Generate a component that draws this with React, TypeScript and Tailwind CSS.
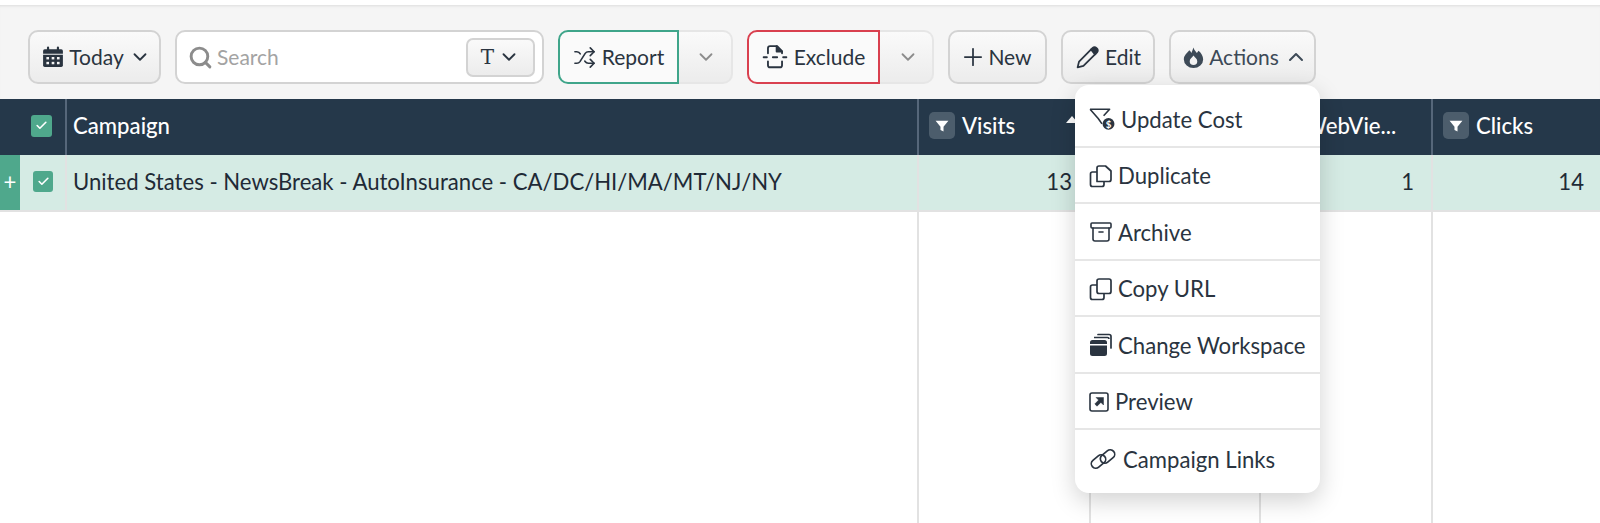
import { Archive, Check, ChevronDown, ChevronUp, Plus, Search, Shuffle } from "lucide-react";

function CalendarIcon() {
  return (
    <svg viewBox="0 0 20 20" className="h-[22px] w-[22px] shrink-0" fill="#2a3440">
      <rect x="4.5" y="0.5" width="2" height="4" rx="1" />
      <rect x="13.5" y="0.5" width="2" height="4" rx="1" />
      <path d="M1 4.5a1.5 1.5 0 0 1 1.5-1.5h15A1.5 1.5 0 0 1 19 4.5V7H1z" />
      <path d="M1 8h18v9.5a1.5 1.5 0 0 1-1.5 1.5h-15A1.5 1.5 0 0 1 1 17.5z" />
      <g fill="#f5f5f5">
        <rect x="4" y="10" width="2.4" height="2.2" />
        <rect x="8.8" y="10" width="2.4" height="2.2" />
        <rect x="13.6" y="10" width="2.4" height="2.2" />
        <rect x="4" y="14.4" width="2.4" height="2.2" />
        <rect x="8.8" y="14.4" width="2.4" height="2.2" />
        <rect x="13.6" y="14.4" width="2.4" height="2.2" />
      </g>
    </svg>
  );
}

function ExcludeIcon() {
  return (
    <svg viewBox="0 0 24 24" className="h-[26px] w-[26px] shrink-0" fill="none" stroke="#2a3440" strokeWidth="1.7" strokeLinecap="round" strokeLinejoin="round">
      <path d="M5.5 8.5V4a2 2 0 0 1 2-2h6.5l4.5 4.5v2" />
      <path d="M13.5 2v5h5" fill="#2a3440" />
      <path d="M5.5 16v3.5a2 2 0 0 0 2 2h9a2 2 0 0 0 2-2V16" />
      <path d="M1.5 12.2h3M10 12.2h4M19.5 12.2h3" />
    </svg>
  );
}

function FlameIcon() {
  return (
    <svg viewBox="0 0 20 20" className="h-[21px] w-[21px] shrink-0" fill="#3d4a57" fillRule="evenodd">
      <path d="M10 0.5C10.5 3 12 4 13.2 5.6L14.8 3.6C17.4 5.6 19.2 9 19.2 11.8A9.2 8.2 0 0 1 0.8 11.8C0.8 8 4 6 6 3.2C7 4 7.6 4.8 8 5.6C8.6 4 9.5 2.2 10 0.5ZM10 8.2C8.6 10.4 6.4 11 6.4 13.6A3.6 3.6 0 0 0 13.6 13.6C13.6 11 11.4 10.4 10 8.2Z" />
    </svg>
  );
}

function PencilIcon() {
  return (
    <svg viewBox="0 0 24 24" className="h-[25px] w-[25px] shrink-0" fill="none" stroke="#2a3440" strokeWidth="1.7" strokeLinejoin="round">
      <path d="M2.5 21.5l1.4-5.6L15.5 4.3l4.2 4.2L8.1 20.1z" />
      <path d="M15.5 4.3l1.5-1.5a2.4 2.4 0 0 1 3.4 0l.8.8a2.4 2.4 0 0 1 0 3.4l-2 2z" fill="#2a3440" />
    </svg>
  );
}

function FilterIcon() {
  return (
    <span className="flex h-[27px] w-[26px] shrink-0 items-center justify-center rounded-[5px] bg-[#4c5d6c]">
      <svg viewBox="0 0 12 12" className="h-[14px] w-[14px]" fill="#fff">
        <path d="M0.5 1.5h11L7.3 6.6v4.2L4.7 9.4V6.6z" />
      </svg>
    </span>
  );
}

function CheckBox({ size }: { size: string }) {
  return (
    <span className={`flex ${size} items-center justify-center rounded-[3px] bg-[#4fa88c]`}>
      <Check size={13} color="#fff" strokeWidth={3} />
    </span>
  );
}

function FilterCostIcon() {
  return (
    <svg viewBox="0 0 24 24" className="h-[26px] w-[26px] shrink-0" fill="none" stroke="#2a3440" strokeWidth="1.5" strokeLinejoin="round">
      <path d="M1 3h18l-5.5 6" />
      <path d="M1 3l7.5 8.5 3.5 5" />
      <circle cx="18" cy="16.5" r="5.5" fill="#2a3440" stroke="none" />
      <text x="18" y="20" fontSize="9" fontWeight="700" textAnchor="middle" fill="#fff" stroke="none" fontFamily="Lato">$</text>
    </svg>
  );
}

function DuplicateIcon() {
  return (
    <svg viewBox="0 0 24 24" className="h-6 w-6 shrink-0" fill="none" stroke="#2a3440" strokeWidth="1.7" strokeLinejoin="round">
      <path d="M8 17.5V4a2 2 0 0 1 2-2h6.5L22 7v8.5a2 2 0 0 1-2 2z" />
      <path d="M8 8H3.5a2 2 0 0 0-2 2v10.5a2 2 0 0 0 2 2H13a2 2 0 0 0 2-2v-3" />
    </svg>
  );
}

function CopyIcon() {
  return (
    <svg viewBox="0 0 24 24" className="h-6 w-6 shrink-0" fill="none" stroke="#2a3440" strokeWidth="1.7" strokeLinejoin="round">
      <rect x="8" y="2" width="14" height="14.5" rx="2" />
      <path d="M8 8H3.5a2 2 0 0 0-2 2v10.5a2 2 0 0 0 2 2H13a2 2 0 0 0 2-2v-4" />
    </svg>
  );
}

function WorkspaceIcon() {
  return (
    <svg viewBox="0 0 24 24" className="h-6 w-6 shrink-0" fill="none" stroke="#2a3440" strokeWidth="1.7" strokeLinejoin="round">
      <path d="M9 1.5h11a2 2 0 0 1 2 2V15" strokeLinecap="round" />
      <path d="M5 4.5h13.5a1.5 1.5 0 0 1 1.5 1.5" />
      <path d="M1 9.5A2.5 2.5 0 0 1 3.5 7h12A2.5 2.5 0 0 1 18 9.5V11H1z" fill="#2a3440" stroke="none" />
      <path d="M1 12.5h17v8a2.5 2.5 0 0 1-2.5 2.5h-12A2.5 2.5 0 0 1 1 20.5z" fill="#2a3440" stroke="none" />
    </svg>
  );
}

function PreviewIcon() {
  return (
    <svg viewBox="0 0 20 20" className="h-5 w-5 shrink-0" fill="none" stroke="#2a3440" strokeLinejoin="round">
      <rect x="1" y="1" width="18" height="18" rx="2" strokeWidth="1.6" />
      <path d="M7 5.5h7.5V13l-2.6-2.6L8 14.2 5.8 12l3.8-3.9z" fill="#2a3440" strokeWidth="0.5" />
    </svg>
  );
}

function LinksIcon() {
  return (
    <svg viewBox="0 0 28 28" className="h-7 w-7 shrink-0" fill="none" stroke="#2a3440" strokeWidth="1.7">
      <rect x="1.5" y="12" width="16" height="9" rx="4.5" transform="rotate(-40 9.5 16.5)" />
      <rect x="10.5" y="7" width="16" height="9" rx="4.5" transform="rotate(-40 18.5 11.5)" />
    </svg>
  );
}

const menuItems = [
  { label: "Update Cost", icon: <FilterCostIcon />, gap: "gap-[6px]" },
  { label: "Duplicate", icon: <DuplicateIcon />, gap: "gap-[5px]" },
  { label: "Archive", icon: <Archive size={24} color="#2a3440" strokeWidth={1.6} />, gap: "gap-[5px]" },
  { label: "Copy URL", icon: <CopyIcon />, gap: "gap-[5px]" },
  { label: "Change Workspace", icon: <WorkspaceIcon />, gap: "gap-[5px]" },
  { label: "Preview", icon: <PreviewIcon />, gap: "gap-[6px]" },
  { label: "Campaign Links", icon: <LinksIcon />, gap: "gap-[6px]" },
];

const btn = "flex h-[54px] items-center rounded-[10px] border-2 border-[#d3d3d3] bg-gradient-to-b from-[#fafafa] to-[#ececec] text-[21px] text-[#2a3440]";
const columns = "grid grid-cols-[67px_852px_172px_170px_172px_1fr]";

export default function App() {
  return (
    <div className="relative h-[523px] w-[1600px] overflow-hidden bg-white font-['Lato',sans-serif] text-[22.15px] text-[#1f2a36]">
      {/* Toolbar */}
      <div className="h-[99px] border-t-[5px] border-white bg-[#f5f5f5] pl-[28px] pt-[25px] shadow-[inset_0_3px_3px_-2px_rgba(0,0,0,0.1)]">
        <div className="flex items-center">
          <button className={`${btn} w-[133px] justify-center gap-[5px] pl-[4px]`}>
            <CalendarIcon />
            <span>Today</span>
            <ChevronDown size={22} strokeWidth={2} />
          </button>

          <div className="ml-[14px] flex h-[54px] w-[369px] items-center rounded-[10px] border-2 border-[#d3d3d3] bg-white pl-[11px] pr-[7px] text-[21px]">
            <Search size={25} color="#8c8c8c" strokeWidth={2.8} />
            <span className="ml-[4px] flex-1 text-[#a3a3a3]">Search</span>
            <span className="flex h-[39px] w-[69px] items-center justify-center gap-[4px] rounded-[7px] border-2 border-[#d3d3d3] bg-gradient-to-b from-[#fafafa] to-[#ececec]">
              <span className="font-['DejaVu_Serif',serif] text-[20px] leading-none text-[#2a3440]">T</span>
              <ChevronDown size={22} color="#2a3440" />
            </span>
          </div>

          <div className="ml-[14px] flex h-[54px] w-[175px] text-[21px]">
            <button className="flex w-[121px] items-center justify-center gap-[6px] rounded-l-[10px] border-2 border-[#3fa58a] bg-[#fafafa] text-[#2a3440]">
              <Shuffle size={23} strokeWidth={1.7} />
              Report
            </button>
            <span className="flex flex-1 items-center justify-center rounded-r-[10px] border-2 border-l-0 border-[#e6e6e6] bg-gradient-to-b from-[#fafafa] to-[#ececec] pl-[2px]">
              <ChevronDown size={22} color="#8c8c8c" />
            </span>
          </div>

          <div className="ml-[14px] flex h-[54px] w-[187px] text-[21px]">
            <button className="flex w-[133px] items-center justify-center gap-[6px] rounded-l-[10px] border-2 border-[#d9404f] bg-[#fafafa] text-[#2a3440]">
              <ExcludeIcon />
              Exclude
            </button>
            <span className="flex flex-1 items-center justify-center rounded-r-[10px] border-2 border-l-0 border-[#e6e6e6] bg-gradient-to-b from-[#fafafa] to-[#ececec] pl-[3px]">
              <ChevronDown size={22} color="#8c8c8c" />
            </span>
          </div>

          <button className={`${btn} ml-[14px] w-[99px] justify-center gap-[1px] pr-[4px]`}>
            <Plus size={28} strokeWidth={1.5} />
            New
          </button>
          <button className={`${btn} ml-[14px] w-[94px] justify-center gap-[5px]`}>
            <PencilIcon />
            Edit
          </button>
          <button className={`${btn} ml-[14px] w-[147px] justify-center gap-[5px] to-[#dedede] pl-[6px] text-[20.5px]`}>
            <FlameIcon />
            <span className="text-[#3d4a57]">Actions</span>
            <ChevronUp size={24} color="#3d4a57" />
          </button>
        </div>
      </div>

      {/* Table header */}
      <div className={`${columns} h-[56px] bg-[#25384a] font-medium text-white`}>
        <div className="flex items-center border-r-2 border-[#56677a] pb-[3px] pl-[31px]">
          <CheckBox size="h-[22px] w-[21px]" />
        </div>
        <div className="flex items-center border-r-2 border-[#56677a] pb-[3px] pl-[6px]">Campaign</div>
        <div className="flex items-center gap-[7px] border-r-2 border-[#56677a] pb-[3px] pl-[10px]">
          <FilterIcon />
          Visits
        </div>
        <div className="border-r-2 border-[#56677a]" />
        <div className="flex items-center gap-[7px] border-r-2 border-[#56677a] pb-[3px] pl-[10px]">
          <FilterIcon />
          WebVie...
        </div>
        <div className="flex items-center gap-[7px] pb-[3px] pl-[10px]">
          <FilterIcon />
          Clicks
        </div>
      </div>

      {/* Selected row */}
      <div className={`${columns} h-[57px] border-b-2 border-[#e2e2e2] bg-[#d5ebe4]`}>
        <div className="flex items-center border-r-2 border-[#e2e2e2]">
          <span className="flex h-full w-[20px] items-center justify-center bg-[#4fa88c] pb-[2px] text-white">+</span>
          <span className="ml-[13px] pb-[2px]">
            <CheckBox size="h-[21px] w-[20px]" />
          </span>
        </div>
        <div className="flex items-center border-r-2 border-[#e2e2e2] pb-[2px] pl-[6px]">
          United States - NewsBreak - AutoInsurance - CA/DC/HI/MA/MT/NJ/NY
        </div>
        <div className="flex items-center justify-end border-r-2 border-[#e2e2e2] pb-[2px] pr-[17px]">13</div>
        <div className="border-r-2 border-[#e2e2e2]" />
        <div className="flex items-center justify-end border-r-2 border-[#e2e2e2] pb-[2px] pr-[17px]">1</div>
        <div className="flex items-center justify-end pb-[2px] pr-[16px]">14</div>
      </div>

      {/* Empty column lines */}
      <div className={`${columns} h-[320px]`}>
        <div />
        <div className="border-r-2 border-[#e2e2e2]" />
        <div className="border-r-2 border-[#e2e2e2]" />
        <div className="border-r-2 border-[#e2e2e2]" />
        <div className="border-r-2 border-[#e2e2e2]" />
        <div />
      </div>

      {/* Sort marker showing beside the open menu */}
      <span className="absolute left-[1066px] top-[116px] h-0 w-0 border-x-[6px] border-b-[7px] border-x-transparent border-b-white" />

      {/* Actions menu */}
      <div className="absolute left-[1075px] top-[85px] w-[245px] rounded-[14px] bg-white pb-[6px] pt-[6px] shadow-[0_8px_24px_rgba(0,0,0,0.18)]">
        {menuItems.map((item, i) => (
          <div
            key={item.label}
            className={`flex h-[56.5px] items-center px-[14px] pt-[2px] text-[#2a3440] ${item.gap} ${i < menuItems.length - 1 ? "border-b-2 border-[#e6e6e6]" : ""}`}
          >
            {item.icon}
            <span>{item.label}</span>
          </div>
        ))}
      </div>
    </div>
  );
}
